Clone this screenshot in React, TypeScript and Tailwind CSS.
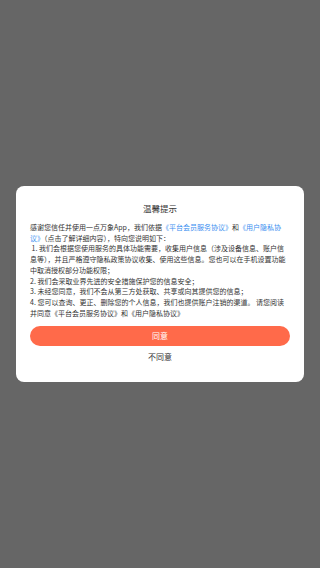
import React from 'react';

const Link = ({ children }: { children: React.ReactNode }) => (
  <span className="text-[#3b8ff0]">{children}</span>
);

export default function App() {
  return (
    <div
      className="flex min-h-screen items-center justify-center bg-[#666666] px-4"
      style={{ fontFamily: '"Noto Sans CJK SC", "Noto Sans", sans-serif' }}
    >
      <div className="w-full rounded-lg bg-white px-[14px] pb-[19px] pt-[16px]">
        <h2 className="text-center text-[8.5px] leading-[12px] text-[#333333]">温馨提示</h2>

        <div className="mt-[7.5px] text-[7px] leading-[10.75px] text-[#333333]">
          <p>
            感谢您信任并使用一点万象App，我们依据<Link>《平台会员服务协议》</Link>和<Link>《用户隐私协议》</Link>（点击了解详细内容），特向您说明如下：
          </p>
          <p>&nbsp;1. 我们会根据您使用服务的具体功能需要，收集用户信息（涉及设备信息、账户信息等），并且严格遵守隐私政策协议收集、使用这些信息。您也可以在手机设置功能中取消授权部分功能权限；</p>
          <p>2. 我们会采取业界先进的安全措施保护您的信息安全；</p>
          <p>3. 未经您同意，我们不会从第三方处获取、共享或向其提供您的信息；</p>
          <p>4. 您可以查询、更正、删除您的个人信息，我们也提供账户注销的渠道。 请您阅读并同意《平台会员服务协议》和《用户隐私协议》</p>
        </div>

        <button
          type="button"
          className="mt-[7px] flex h-[20px] w-full items-center justify-center rounded-full bg-[#ff6a4a] text-[8px] text-white"
        >
          同意
        </button>
        <button
          type="button"
          className="mx-auto mt-[5px] block text-[8px] leading-[12px] text-[#333333]"
        >
          不同意
        </button>
      </div>
    </div>
  );
}
